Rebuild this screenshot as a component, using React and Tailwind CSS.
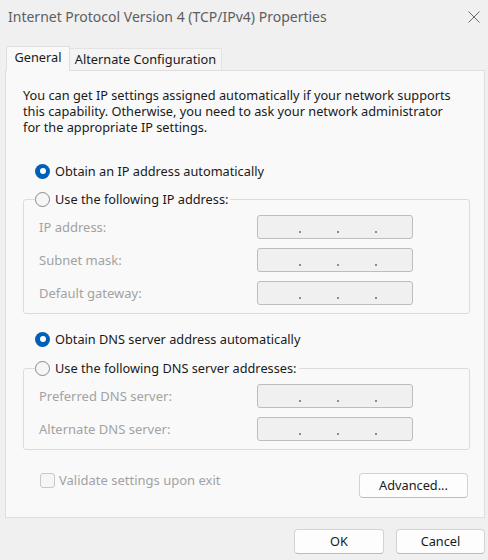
import React from "react";

const FONT = { fontFamily: '"Noto Sans", "Liberation Sans", sans-serif' };

function Radio({ checked, label }) {
  return (
    <div className="flex items-center h-[16px] gap-[5px]">
      {checked ? (
        <span className="w-[15px] h-[15px] rounded-full bg-[#005fb8] flex items-center justify-center shrink-0">
          <span className="w-[6px] h-[6px] rounded-full bg-white" />
        </span>
      ) : (
        <span className="w-[15px] h-[15px] rounded-full border border-[#8a8a8a] bg-[#f6f6f6] shrink-0" />
      )}
      <span className="text-[12.75px] text-[#1a1a1a] leading-[16px] whitespace-nowrap">{label}</span>
    </div>
  );
}

function IpBox() {
  return (
    <div className="w-[156px] h-[24px] rounded-[3px] border border-[#bdbdbd] bg-[#f0f0f0] flex items-end pb-[5px] pl-[41px] gap-[36px]">
      <span className="w-[2px] h-[2px] bg-[#8c8c8c]" />
      <span className="w-[2px] h-[2px] bg-[#8c8c8c]" />
      <span className="w-[2px] h-[2px] bg-[#8c8c8c]" />
    </div>
  );
}

function Row({ label }) {
  return (
    <div className="flex items-center justify-between h-[24px] pr-[56px]">
      <span className="text-[13px] text-[#a2a2a2] leading-[16px]">{label}</span>
      <IpBox />
    </div>
  );
}

function Group({ legend, rows }) {
  return (
    <fieldset className="border border-[#dcdcdc] rounded-[3px] pl-[15px] pt-[8px] pb-[8px]">
      <legend className="ml-[-4px] pr-[2px]">
        <Radio checked={false} label={legend} />
      </legend>
      <div className="flex flex-col gap-[9px]">
        {rows.map((r) => (
          <Row key={r} label={r} />
        ))}
      </div>
    </fieldset>
  );
}

function Button({ children, w }) {
  return (
    <button
      className={`${w} h-[25px] rounded-[4px] border border-[#d3d3d3] border-b-[#bcbcbc] bg-[#fdfdfd] text-[12.75px] text-[#1a1a1a] flex items-center justify-center`}
    >
      {children}
    </button>
  );
}

export default function App() {
  return (
    <div className="w-[488px] h-[560px] bg-[#f0f0f0] overflow-hidden" style={FONT}>
      {/* Title bar */}
      <div className="h-[34px] flex items-center justify-between pl-[8px] pr-[8px]">
        <span className="text-[14px] text-[#5e5e5e] leading-[20px]">
          Internet Protocol Version 4 (TCP/IPv4) Properties
        </span>
        <svg width="12" height="12" viewBox="0 0 12 12">
          <path d="M0.5 0.5 L11.5 11.5 M11.5 0.5 L0.5 11.5" stroke="#6a6a6a" strokeWidth="1" fill="none" />
        </svg>
      </div>

      {/* Tabs */}
      <div className="mt-[12px] pl-[6px] flex items-end relative z-10 -mb-px">
        <div className="w-[64px] h-[25px] bg-[#f9f9f9] border border-b-0 border-[#dedede] rounded-t-[2px] flex items-center justify-center text-[12.75px] text-[#1a1a1a] pb-[2px]">
          General
        </div>
        <div className="w-[152px] h-[22px] bg-[#f4f4f4] border border-l-0 border-b-0 border-[#e3e3e3] flex items-center justify-center text-[12.75px] text-[#1a1a1a] mb-px">
          Alternate Configuration
        </div>
      </div>

      {/* Panel */}
      <div className="ml-[5px] w-[480px] h-[448px] border border-[#dedede] bg-[#f9f9f9] pt-[16px] pl-[17px] pr-[14px]">
        <p className="text-[12.75px] leading-[16px] text-[#1a1a1a] pr-[10px]">
          You can get IP settings assigned automatically if your network supports this capability. Otherwise, you need to ask your network administrator for the appropriate IP settings.
        </p>

        <div className="mt-[28px] pl-[12px]">
          <Radio checked label="Obtain an IP address automatically" />
        </div>
        <div className="mt-[12px]">
          <Group legend="Use the following IP address:" rows={["IP address:", "Subnet mask:", "Default gateway:"]} />
        </div>

        <div className="mt-[17px] pl-[12px]">
          <Radio checked label="Obtain DNS server address automatically" />
        </div>
        <div className="mt-[13px]">
          <Group legend="Use the following DNS server addresses:" rows={["Preferred DNS server:", "Alternate DNS server:"]} />
        </div>

        <div className="mt-[22px] flex items-start justify-between pl-[17px] pr-[2px]">
          <div className="flex items-center gap-[4px] h-[16px]">
            <span className="w-[15px] h-[15px] rounded-[3px] border border-[#c8c8c8] bg-[#f5f5f5]" />
            <span className="text-[13px] text-[#a2a2a2] leading-[16px]">Validate settings upon exit</span>
          </div>
          <div className="mt-[1px]">
            <Button w="w-[109px]">Advanced...</Button>
          </div>
        </div>
      </div>

      {/* Bottom buttons */}
      <div className="mt-[11px] flex justify-end gap-[12px] pr-[3px]">
        <Button w="w-[90px]">OK</Button>
        <Button w="w-[89px]">Cancel</Button>
      </div>
    </div>
  );
}
